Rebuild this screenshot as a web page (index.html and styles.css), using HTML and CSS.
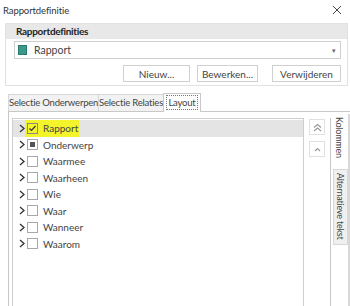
FILE: index.html
```html
<!DOCTYPE html>
<html>
<head>
  <title>Rapportdefinitie</title>
  <link rel="stylesheet" href="styles.css">
</head>
<body>
  <div class="window">
    <div class="titlebar">
      <span class="title">Rapportdefinitie</span>
      <svg class="close" width="10" height="10" viewBox="0 0 10 10"><path d="M1 1 L9 9 M9 1 L1 9" stroke="#444" stroke-width="1"/></svg>
    </div>

    <div class="group">
      <div class="group-header">Rapportdefinities</div>
      <div class="group-body">
        <div class="combo">
          <span class="combo-icon"></span>
          <span class="combo-text">Rapport</span>
          <span class="combo-arrow">&#9662;</span>
        </div>
        <div class="button-row">
          <button class="btn btn-new">Nieuw...</button>
          <button class="btn btn-edit">Bewerken...</button>
          <button class="btn btn-delete">Verwijderen</button>
        </div>
      </div>
    </div>

    <div class="tabs">
      <div class="tab tab-subjects">Selectie Onderwerpen</div>
      <div class="tab tab-relations">Selectie Relaties</div>
      <div class="tab active"><span class="focus">Layout</span></div>
    </div>

    <div class="tabpage">
      <div class="tree">
        <div class="row selected">
          <svg class="chevron" width="6" height="9" viewBox="0 0 6 9"><path d="M1 1 L5 4.5 L1 8" fill="none" stroke="#333" stroke-width="1.3"/></svg>
          <span class="highlight">
            <span class="check checked"><svg width="9" height="9" viewBox="0 0 9 9"><path d="M1.5 4.5 L3.5 6.5 L7.5 2" fill="none" stroke="#333" stroke-width="1.2"/></svg></span>
            <span class="label">Rapport</span>
          </span>
        </div>
        <div class="row">
          <svg class="chevron" width="6" height="9" viewBox="0 0 6 9"><path d="M1 1 L5 4.5 L1 8" fill="none" stroke="#333" stroke-width="1.3"/></svg>
          <span class="check partial"><span class="dot"></span></span>
          <span class="label">Onderwerp</span>
        </div>
        <div class="row">
          <svg class="chevron" width="6" height="9" viewBox="0 0 6 9"><path d="M1 1 L5 4.5 L1 8" fill="none" stroke="#333" stroke-width="1.3"/></svg>
          <span class="check"></span>
          <span class="label">Waarmee</span>
        </div>
        <div class="row">
          <svg class="chevron" width="6" height="9" viewBox="0 0 6 9"><path d="M1 1 L5 4.5 L1 8" fill="none" stroke="#333" stroke-width="1.3"/></svg>
          <span class="check"></span>
          <span class="label">Waarheen</span>
        </div>
        <div class="row">
          <svg class="chevron" width="6" height="9" viewBox="0 0 6 9"><path d="M1 1 L5 4.5 L1 8" fill="none" stroke="#333" stroke-width="1.3"/></svg>
          <span class="check"></span>
          <span class="label">Wie</span>
        </div>
        <div class="row">
          <svg class="chevron" width="6" height="9" viewBox="0 0 6 9"><path d="M1 1 L5 4.5 L1 8" fill="none" stroke="#333" stroke-width="1.3"/></svg>
          <span class="check"></span>
          <span class="label">Waar</span>
        </div>
        <div class="row">
          <svg class="chevron" width="6" height="9" viewBox="0 0 6 9"><path d="M1 1 L5 4.5 L1 8" fill="none" stroke="#333" stroke-width="1.3"/></svg>
          <span class="check"></span>
          <span class="label">Wanneer</span>
        </div>
        <div class="row">
          <svg class="chevron" width="6" height="9" viewBox="0 0 6 9"><path d="M1 1 L5 4.5 L1 8" fill="none" stroke="#333" stroke-width="1.3"/></svg>
          <span class="check"></span>
          <span class="label">Waarom</span>
        </div>
      </div>

      <div class="movers">
        <div class="move-btn">
          <svg width="9" height="9" viewBox="0 0 9 9"><path d="M1 4.5 L4.5 1.5 L8 4.5 M1 8 L4.5 5 L8 8" fill="none" stroke="#999" stroke-width="1.2"/></svg>
        </div>
        <div class="move-btn">
          <svg width="9" height="9" viewBox="0 0 9 9"><path d="M2 6 L4.5 3.5 L7 6" fill="none" stroke="#999" stroke-width="1.2"/></svg>
        </div>
      </div>

      <div class="sidetabs">
        <div class="sidetab active"><span class="vtext">Kolommen</span></div>
        <div class="sidetab"><span class="vtext">Alternatieve tekst</span></div>
      </div>
    </div>
  </div>
</body>
</html>
```

FILE: styles.css
```css
body {
  margin: 0;
  background: #fff;
  font-family: Lato, "Open Sans", sans-serif;
  color: #222;
}

.window {
  width: 350px;
  height: 306px;
  overflow: hidden;
  display: flex;
  flex-direction: column;
}

.titlebar {
  height: 23px;
  display: flex;
  justify-content: space-between;
  align-items: center;
  padding: 0 8px 3px 3px;
  box-sizing: border-box;
}

.title {
  font-size: 9.5px;
  color: #333;
  letter-spacing: -0.1px;
}

.group {
  margin: 0 2px 0 5px;
  border: 1px solid #e2e2e2;
  height: 63px;
  box-sizing: border-box;
}

.group-header {
  background: #e8e8e8;
  height: 15px;
  line-height: 15px;
  padding-left: 10px;
  font-size: 10px;
  font-weight: bold;
  letter-spacing: -0.3px;
  color: #222;
}

.group-body {
  padding: 2px 6px 0 8px;
}

.combo {
  height: 18px;
  border: 1px solid #cfcfcf;
  box-sizing: border-box;
  display: flex;
  align-items: center;
  padding: 0 4px 0 3px;
}

.combo-icon {
  width: 9px;
  height: 10px;
  background: #3a9a8a;
  border: 1px solid #2c7a6e;
  box-sizing: border-box;
}

.combo-text {
  flex: 1;
  margin-left: 7px;
  font-size: 10.5px;
  color: #444;
}

.combo-arrow {
  font-size: 7px;
  color: #666;
}

.button-row {
  display: flex;
  justify-content: flex-end;
  margin-top: 6px;
}

.btn {
  height: 17px;
  padding: 0;
  border: 1px solid #d0d0d0;
  background: #fff;
  font-family: inherit;
  font-size: 10px;
  color: #444;
}

.btn-new {
  width: 67px;
}

.btn-edit {
  width: 61px;
  margin-left: 7px;
}

.btn-delete {
  width: 69px;
  margin-left: 14px;
}

.tabs {
  display: flex;
  align-items: flex-end;
  margin: 6px 0 0 8px;
  height: 19px;
}

.tab {
  height: 17px;
  line-height: 16px;
  box-sizing: border-box;
  border: 1px solid #d8d8d8;
  border-bottom: none;
  background: #f2f2f2;
  font-size: 9.5px;
  letter-spacing: -0.2px;
  color: #444;
  white-space: nowrap;
  text-align: center;
  margin-right: -1px;
}

.tab-subjects {
  width: 91px;
}

.tab-relations {
  width: 66px;
}

.tab.active {
  height: 19px;
  width: 38px;
  background: #fff;
  border-color: #c8c8c8;
  padding-top: 1px;
  position: relative;
  z-index: 1;
  margin-bottom: -1px;
}

.focus {
  border: 1px dotted #777;
  padding: 0 1px;
  line-height: 13px;
  display: inline-block;
}

.tabpage {
  flex: 1;
  display: flex;
  margin-left: 8px;
  border-left: 1px solid #c8c8c8;
  border-top: 1px solid #c8c8c8;
  padding: 6px 0 0 3px;
}

.tree {
  flex: 1;
  border: 1px solid #cfcfcf;
  border-bottom: none;
  padding-top: 1px;
}

.row {
  height: 16.5px;
  display: flex;
  align-items: center;
  padding-left: 6px;
  font-size: 10px;
  color: #444;
}

.row.selected {
  background: #e4e4e4;
}

.chevron {
  margin-right: 1px;
}

.highlight {
  display: flex;
  align-items: center;
  align-self: stretch;
  background: #f4f42a;
  padding: 0 1px 0 1px;
  margin-left: -1px;
}

.check {
  width: 11px;
  height: 11px;
  border: 1px solid #a8a8a8;
  box-sizing: border-box;
  background: #fff;
  margin-left: 1px;
  display: flex;
  align-items: center;
  justify-content: center;
}

.highlight .check {
  background: transparent;
  border-color: #888;
}

.check.partial .dot {
  width: 5px;
  height: 5px;
  background: #555;
}

.label {
  margin-left: 5px;
}

.movers {
  width: 26px;
  display: flex;
  flex-direction: column;
  align-items: center;
  padding-top: 1px;
  gap: 6px;
  border-right: 1px solid #c8c8c8;
}

.move-btn {
  width: 14px;
  height: 14px;
  border: 1px solid #e0e0e0;
  display: flex;
  align-items: center;
  justify-content: center;
}

.sidetabs {
  width: 17px;
  margin-top: -4px;
  border-right: 2px solid #d8d8d8;
  display: flex;
  flex-direction: column;
  align-items: flex-end;
}

.sidetab {
  width: 15px;
  height: 76px;
  background: #f0f0f0;
  border: 1px solid #d8d8d8;
  box-sizing: border-box;
  display: flex;
  justify-content: center;
  padding-top: 3px;
}

.sidetab.active {
  width: 17px;
  height: 55px;
  background: #fff;
  border: none;
}

.vtext {
  writing-mode: vertical-rl;
  font-size: 9px;
  letter-spacing: -0.2px;
  color: #444;
  white-space: nowrap;
}
```
